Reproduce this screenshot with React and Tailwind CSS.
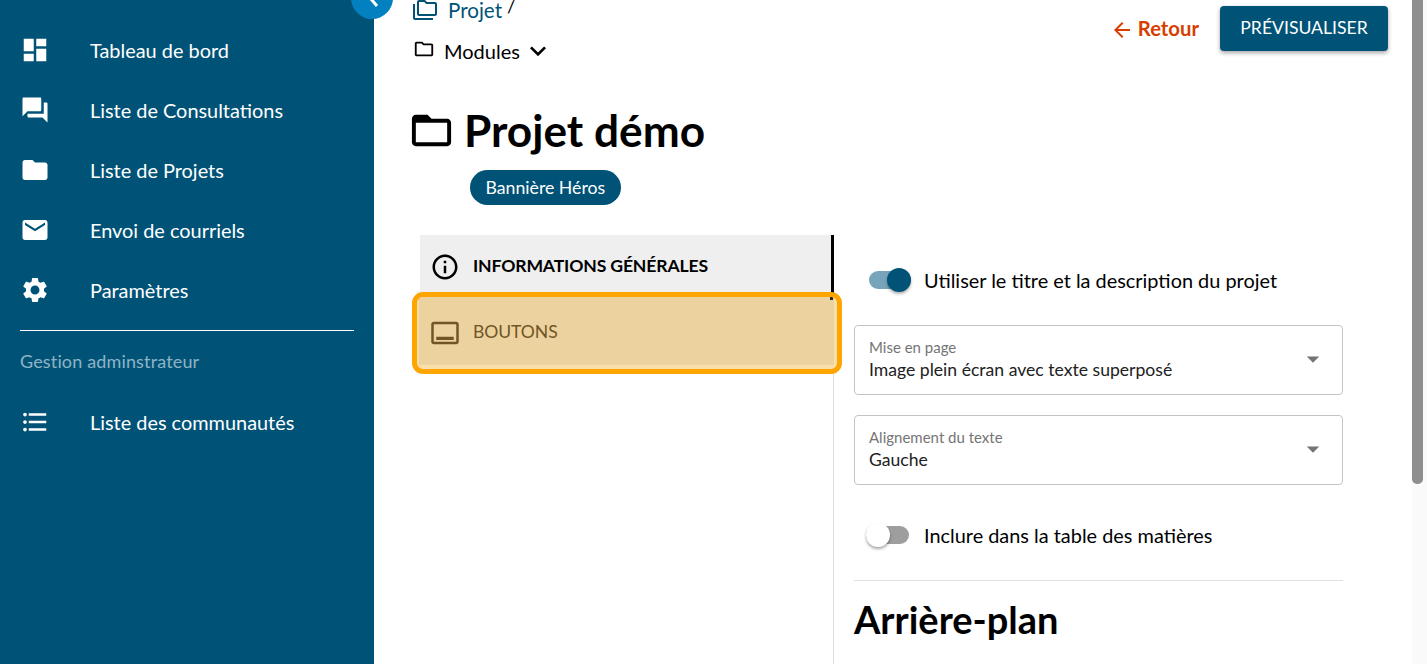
const Ic = ({ d, s = 24, c = "" , vb = "0 0 24 24"}) => (
  <svg width={s} height={s} viewBox={vb} fill="currentColor" className={`shrink-0 ${c}`}><path d={d} /></svg>
);

const I = {
  dash: "M3 13h8V3H3v10zm0 8h8v-6H3v6zm10 0h8V11h-8v10zm0-18v6h8V3h-8z",
  forum: "M21 6h-2v9H6v2c0 .55.45 1 1 1h11l4 4V7c0-.55-.45-1-1-1zm-4 6V3c0-.55-.45-1-1-1H3c-.55 0-1 .45-1 1v14l4-4h10c.55 0 1-.45 1-1z",
  folder: "M10 4H4c-1.1 0-1.99.9-1.99 2L2 18c0 1.1.9 2 2 2h16c1.1 0 2-.9 2-2V8c0-1.1-.9-2-2-2h-8l-2-2z",
  mail: "M20 4H4c-1.1 0-1.99.9-1.99 2L2 18c0 1.1.9 2 2 2h16c1.1 0 2-.9 2-2V6c0-1.1-.9-2-2-2zm0 4l-8 5-8-5V6l8 5 8-5v2z",
  gear: "M19.14 12.94c.04-.3.06-.61.06-.94 0-.32-.02-.64-.07-.94l2.03-1.58c.18-.14.23-.41.12-.61l-1.92-3.32c-.12-.22-.37-.29-.59-.22l-2.39.96c-.5-.38-1.03-.7-1.62-.94l-.36-2.54c-.04-.24-.24-.41-.48-.41h-3.84c-.24 0-.43.17-.47.41l-.36 2.54c-.59.24-1.13.57-1.62.94l-2.39-.96c-.22-.08-.47 0-.59.22L2.74 8.87c-.12.21-.08.47.12.61l2.03 1.58c-.05.3-.09.63-.09.94s.02.64.07.94l-2.03 1.58c-.18.14-.23.41-.12.61l1.92 3.32c.12.22.37.29.59.22l2.39-.96c.5.38 1.03.7 1.62.94l.36 2.54c.05.24.24.41.48.41h3.84c.24 0 .44-.17.47-.41l.36-2.54c.59-.24 1.13-.56 1.62-.94l2.39.96c.22.08.47 0 .59-.22l1.92-3.32c.12-.22.07-.47-.12-.61l-2.01-1.58zM12 15.6c-1.98 0-3.6-1.62-3.6-3.6s1.62-3.6 3.6-3.6 3.6 1.62 3.6 3.6-1.62 3.6-3.6 3.6z",
  list: "M4 10.5c-.83 0-1.5.67-1.5 1.5s.67 1.5 1.5 1.5 1.5-.67 1.5-1.5-.67-1.5-1.5-1.5zm0-6c-.83 0-1.5.67-1.5 1.5S3.17 7.5 4 7.5 5.500 6.830 5.500 6 4.830 4.500 4 4.500zm0 12c-.83 0-1.5.68-1.5 1.500s.68 1.500 1.500 1.500 1.500-.68 1.500-1.500-.67-1.500-1.500-1.500zM7 19h14v-2H7v2zm0-6h14v-2H7v2zm0-8v2h14V5H7z",
  folderO: "M20 6h-8l-2-2H4c-1.100 0-1.990.9-1.990 2L2 18c0 1.100.9 2 2 2h16c1.100 0 2-.9 2-2V8c0-1.100-.9-2-2-2zm0 12H4V8h16v10z",
  folderThin: "M9.170 6l2 2H20v10H4V6h5.170M10 4H4c-1.100 0-1.990.9-1.990 2L2 18c0 1.100.9 2 2 2h16c1.100 0 2-.9 2-2V8c0-1.100-.9-2-2-2h-8l-2-2z",
  folders: "M2 6H0v5h.01L0 20c0 1.100.9 2 2 2h18v-2H2V6zm20-2h-8l-2-2H6c-1.100 0-1.990.9-1.990 2L4 16c0 1.100.9 2 2 2h16c1.100 0 2-.9 2-2V6c0-1.100-.9-2-2-2zm0 12H6V4h5.170l2 2H22v10z",
  info: "M11 7h2v2h-2zm0 4h2v6h-2zm1-9C6.480 2 2 6.480 2 12s4.480 10 10 10 10-4.480 10-10S17.520 2 12 2zm0 18c-4.410 0-8-3.590-8-8s3.590-8 8-8 8 3.590 8 8-3.590 8-8 8z",
  cta: "M21 3H3c-1.100 0-2 .9-2 2v14c0 1.100.9 2 2 2h18c1.100 0 2-.9 2-2V5c0-1.100-.9-2-2-2zm0 16H3V5h18v14zM5 15h14v2.600H5z",
  chevron: "M7.410 8.590 12 13.170l4.590-4.580L18 10l-6 6-6-6z",
  arrow: "M20 11H7.830l5.590-5.590L12 4l-8 8 8 8 1.410-1.410L7.830 13H20v-2z",
};

const nav = [
  ["dash", "Tableau de bord"],
  ["forum", "Liste de Consultations"],
  ["folder", "Liste de Projets"],
  ["mail", "Envoi de courriels"],
  ["gear", "Paramètres"],
];

function NavRow({ icon, label }) {
  return (
    <div className="flex items-center h-[60px] text-white">
      <div className="w-[90px] pl-[20px] flex items-center">
        <Ic d={I[icon]} s={30} c="mt-[2px]" />
      </div>
      <span className="text-[19.9px] leading-6 pt-[1px]">{label}</span>
    </div>
  );
}

function Select({ label, value }) {
  return (
    <div className="relative h-[70px] border border-[#c4c4c4] rounded-[4px] pl-[14px] pt-[11px]">
      <div className="text-[15px] leading-[20px] text-[#757575]">{label}</div>
      <div className="text-[17.6px] leading-[24px] mt-[1px] text-[#212121]">{value}</div>
      <svg width="30" height="30" viewBox="0 0 24 24" fill="#757575" className="absolute right-[14px] top-[18px]"><path d="M7 10l5 5 5-5z" /></svg>
    </div>
  );
}

export default function App() {
  return (
    <div className="flex h-[664px] w-[1427px] overflow-hidden bg-white font-['Lato','Liberation_Sans',sans-serif] text-black relative">
      <aside className="w-[374px] shrink-0 bg-[#005377] relative pt-[19px]">
        <div className="absolute left-[351px] top-[-24px] w-[42px] h-[43px] rounded-full bg-[#0380bf] z-10 text-white">
          <svg width="24" height="24" viewBox="0 0 24 24" fill="none" stroke="currentColor" strokeWidth="3" className="absolute left-[11px] top-[11px]"><path d="M15 5l-6 7 6 7" /></svg>
        </div>
        {nav.map(([i, l]) => <NavRow key={l} icon={i} label={l} />)}
        <div className="mx-[20px] w-[334px] h-px bg-white mt-[11px]" />
        <div className="pl-[20px] mt-[19px] text-[18px] leading-[22px] tracking-[0.15px] text-[#8fb3c5]">Gestion adminstrateur</div>
        <div className="mt-[19px]"><NavRow icon="list" label="Liste des communautés" /></div>
      </aside>

      <main className="flex-1 min-w-0 flex flex-col pl-[36px] relative">
        <div className="flex justify-between pr-[24px] h-[80px]">
          <div>
            <div className="flex items-start h-[35px]">
              <Ic d={I.folders} s={24} c="text-[#005377] ml-[3px] mt-[-2px]" />
              <span className="text-[20.6px] leading-[20px] text-[#005377] ml-[11px]">Projet</span>
              <span className="text-[18px] leading-[12px] ml-[5px]">/</span>
            </div>
            <div className="flex items-center h-[32px]">
              <Ic d={I.folderThin} s={22} c="ml-[3px] mt-[-4px]" />
              <span className="text-[20px] leading-[24px] ml-[9px]">Modules</span>
              <Ic d={I.chevron} s={32} c="ml-[2px] my-[-4px]" />
            </div>
          </div>
          <div className="flex items-start pt-[6px]">
            <div className="flex items-center h-[45px] text-[#d63f00] mr-[21px]">
              <Ic d={I.arrow} s={24} c="mt-[2px]" />
              <span className="text-[20.3px] font-bold leading-6 ml-[4px] mt-[-2px]">Retour</span>
            </div>
            <div className="w-[168px] h-[45px] rounded-[4px] bg-[#005377] text-white text-[17.6px] flex items-center justify-center shadow-[0_2px_4px_rgba(0,0,0,0.35)] pb-[1px]">PRÉVISUALISER</div>
          </div>
        </div>

        <div className="flex items-center h-[60px] mt-[21px]">
          <Ic d={I.folderO} s={47} c="ml-[-2px] mt-[-2px]" />
          <h1 className="text-[44.2px] font-bold leading-[60px] ml-[9px] mt-[-2px]">Projet démo</h1>
        </div>
        <div className="mt-[9px] ml-[60px] self-start h-[35px] rounded-full bg-[#005377] text-white text-[17.7px] leading-[35px] px-[15.5px]">Bannière Héros</div>

        <div className="flex mt-[30px] flex-1 min-h-0">
          <div className="w-[414px] ml-[10px] shrink-0 relative">
            <div className="h-[64px] bg-[#efefef] border-r-[3px] border-black flex items-center pl-[10px]">
              <Ic d={I.info} s={30} />
              <span className="ml-[13px] text-[17.6px] font-bold tracking-[-0.15px] mt-[-2px]">INFORMATIONS GÉNÉRALES</span>
            </div>
            <div className="relative z-10 mt-[-7px] ml-[-8px] w-[430px] h-[82px] border-[5px] border-[#ffa500] rounded-[11px] bg-[#f9dfa9] overflow-hidden">
              <div className="h-[68px] w-[415px] ml-[2px] bg-[#ecd29e] flex items-center pl-[11px] text-[#725525]">
                <Ic d={I.cta} s={30} c="mt-[3px]" />
                <span className="ml-[13px] text-[17.6px] tracking-[-0.1px] mt-[2px]">BOUTONS</span>
              </div>
              <div className="absolute left-[413px] top-0 w-[3px] h-[3px] bg-[#2a2418]" />
            </div>
            <div className="absolute left-[413px] top-[64px] bottom-0 w-px bg-[#dedede]" />
          </div>

          <div className="w-[489px] ml-[20px] shrink-0">
            <div className="flex items-center h-[30px] mt-[30px]">
              <div className="relative w-[42px] h-[18px] ml-[15px] rounded-full bg-[#78a4bb]">
                <div className="absolute right-0 top-[-3px] w-[24px] h-[24px] rounded-full bg-[#005377] shadow-[0_2px_3px_rgba(0,0,0,0.3)]" />
              </div>
              <span className="ml-[13px] text-[19.9px] leading-6">Utiliser le titre et la description du projet</span>
            </div>
            <div className="mt-[30px]"><Select label="Mise en page" value="Image plein écran avec texte superposé" /></div>
            <div className="mt-[20px]"><Select label="Alignement du texte" value="Gauche" /></div>
            <div className="flex items-center h-[30px] mt-[35px]">
              <div className="relative w-[43px] h-[18px] ml-[12px] rounded-full bg-[#9e9e9e]">
                <div className="absolute left-0 top-[-3px] w-[24px] h-[24px] rounded-full bg-white shadow-[0_2px_3px_rgba(0,0,0,0.35)]" />
              </div>
              <span className="ml-[15px] text-[19.9px] leading-6">Inclure dans la table des matières</span>
            </div>
            <div className="h-px bg-[#e0e0e0] mt-[30px]" />
            <h2 className="text-[38px] font-bold leading-[48px] mt-[14px]">Arrière-plan</h2>
          </div>
        </div>
      </main>

      <div className="w-[15px] shrink-0 bg-[#fafafa]">
        <div className="w-[11px] h-[484px] rounded-b-[5px] bg-[#8e8e8e]" />
      </div>
    </div>
  );
}
